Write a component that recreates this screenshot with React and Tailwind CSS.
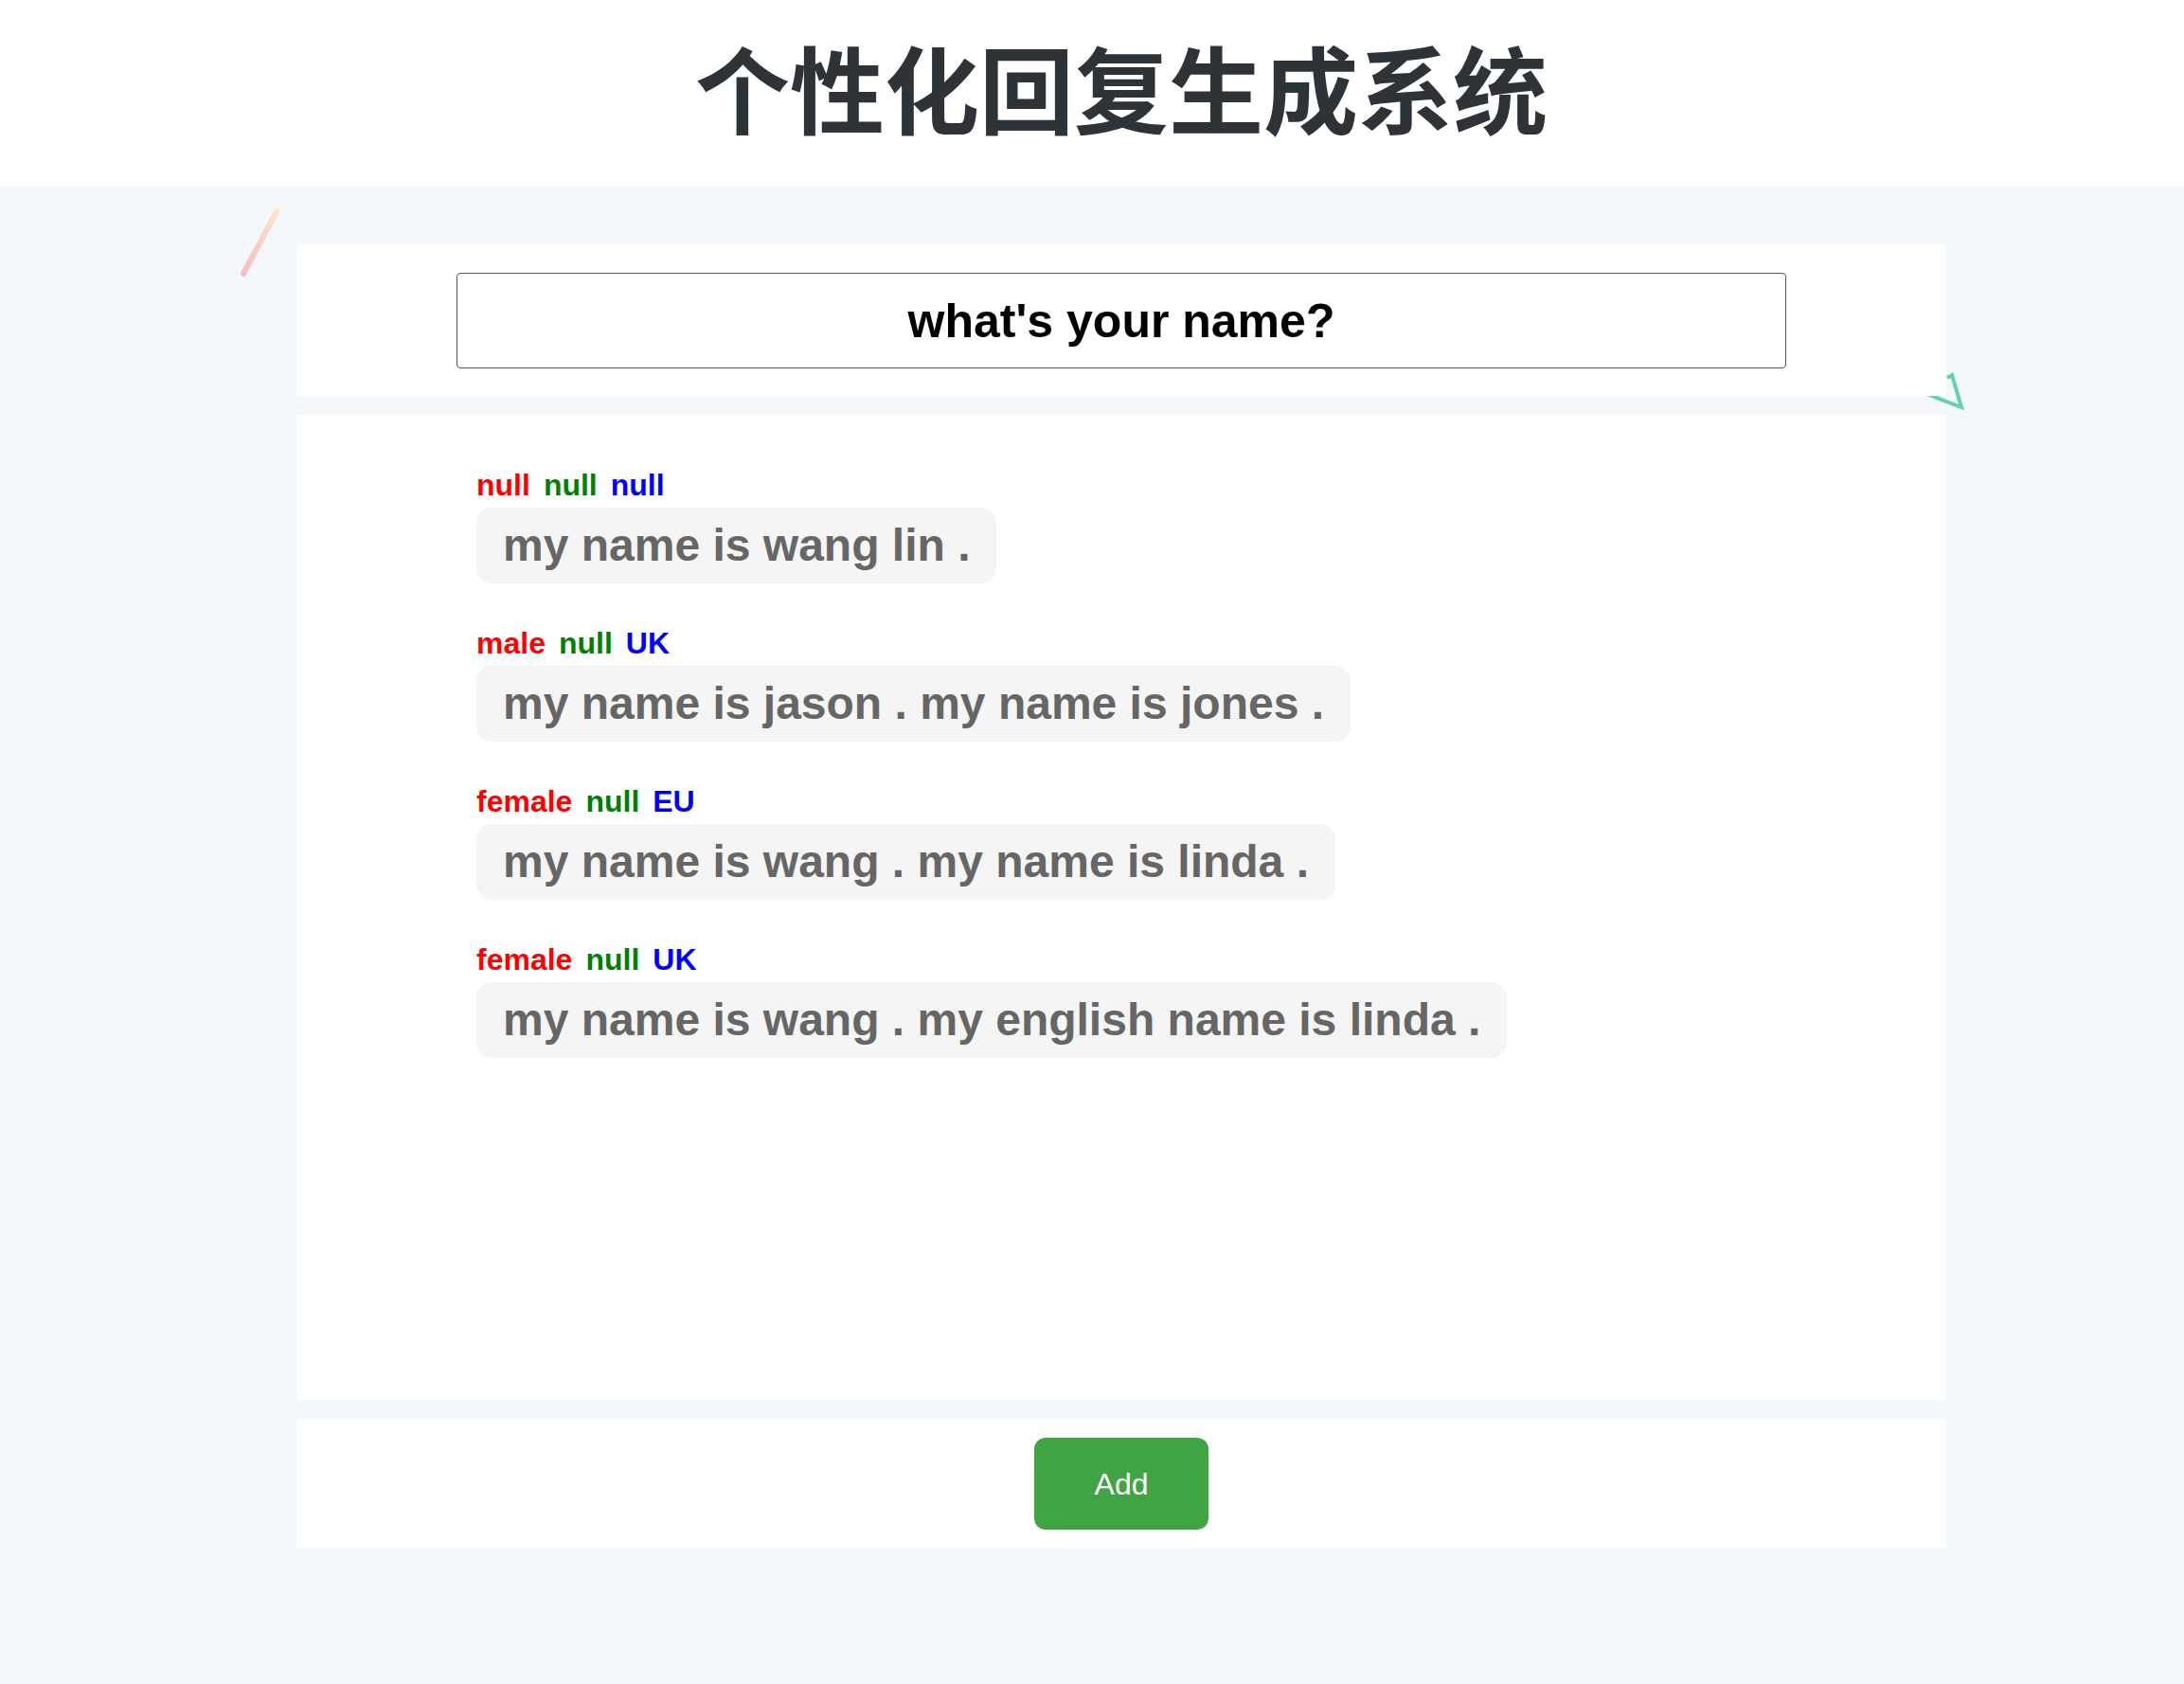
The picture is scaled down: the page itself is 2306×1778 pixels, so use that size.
import React from "react";

const replies = [
  { gender: "null", age: "null", region: "null", text: "my name is wang lin ." },
  { gender: "male", age: "null", region: "UK", text: "my name is jason . my name is jones ." },
  { gender: "female", age: "null", region: "EU", text: "my name is wang . my name is linda ." },
  { gender: "female", age: "null", region: "UK", text: "my name is wang . my english name is linda ." },
];

const ReplyItem = ({ reply }) => (
  <div className="mb-[45px]">
    {/* tags */}
    <div className="flex gap-[14px] text-[32px] leading-[37px] font-bold">
      <span className="text-[#ff0000]">{reply.gender}</span>
      <span className="text-[#008000]">{reply.age}</span>
      <span className="text-[#0000ff]">{reply.region}</span>
    </div>
    <div className="mt-[5px] inline-block rounded-[16px] bg-[#f5f5f5] px-[28px] py-[12px] text-[48px] leading-[56px] font-bold text-[#666666]">
      {reply.text}
    </div>
  </div>
);

export default function App() {
  return (
    <div className="min-h-screen bg-[#f5f8fb] font-['Liberation_Sans',Arial,sans-serif]">
      {/* Header */}
      <header className="h-[197px] bg-white">
        <div className="ml-[313px] w-[1742px] pt-[41px] text-center">
          <h1 className="font-['Noto_Sans_CJK_SC','Liberation_Sans',sans-serif] text-[100px] leading-none font-bold text-[#2e3338]">
            个性化回复生成系统
          </h1>
        </div>
      </header>

      <main className="relative ml-[313px] w-[1742px] pt-[61px] pb-[140px]">
        {/* decorations */}
        <svg className="absolute left-[-63px] top-[20px]" width="50" height="80" viewBox="0 0 50 80">
          <defs>
            <linearGradient id="pinkLine" gradientUnits="userSpaceOnUse" x1="42" y1="6" x2="7" y2="72">
              <stop offset="0" stopColor="#fde3cc" />
              <stop offset="1" stopColor="#f8bcc0" />
            </linearGradient>
          </defs>
          <line x1="42" y1="6" x2="7" y2="72" stroke="url(#pinkLine)" strokeWidth="6" strokeLinecap="round" />
        </svg>
        <svg className="absolute left-[1722px] top-[193px]" width="50" height="50" viewBox="0 0 50 50">
          <polyline
            points="0,26 36,40 26,6 21,9"
            fill="none"
            stroke="#5dd5a9"
            strokeWidth="4"
            strokeLinejoin="miter"
          />
        </svg>

        {/* question */}
        <section className="relative z-10 flex h-[160px] items-center justify-center bg-white">
          <div className="flex h-[101px] w-[1404px] items-center justify-center rounded-[4px] border border-[#555555] pt-[2px] text-[50px] font-bold text-black">
            what's your name?
          </div>
        </section>

        {/* replies */}
        <section className="relative z-10 mt-[20px] h-[1040px] bg-white pl-[190px] pt-[56px]">
          {replies.map((reply, index) => (
            <ReplyItem key={index} reply={reply} />
          ))}
        </section>

        {/* actions */}
        <section className="relative z-10 mt-[20px] flex h-[137px] items-center justify-center bg-white">
          <button className="h-[97px] w-[184px] rounded-[12px] bg-[#41a443] text-[32px] text-white">
            Add
          </button>
        </section>
      </main>
    </div>
  );
}
